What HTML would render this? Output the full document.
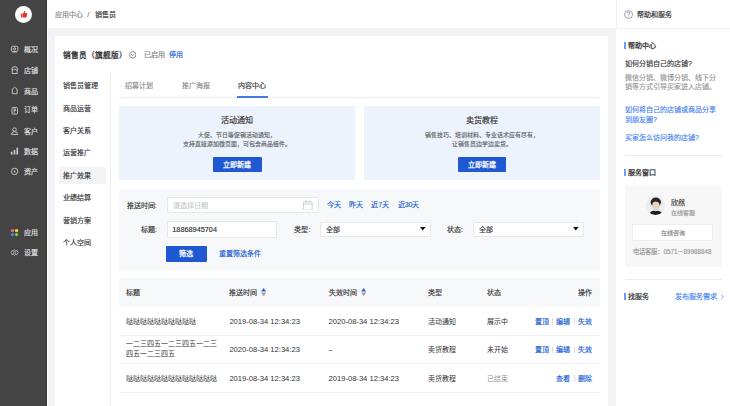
<!DOCTYPE html>
<html lang="zh-CN"><head><meta charset="utf-8">
<style>
html,body{margin:0;padding:0;width:730px;height:406px;overflow:hidden;background:#f2f3f5;font-family:"Liberation Sans",sans-serif;color:#323233}
.a{position:absolute}
.t{position:absolute;white-space:nowrap;line-height:10px;font-size:7px;-webkit-text-stroke:0.15px currentColor}
.d{font-size:7.6px}
.g{color:#969799}
.g2{color:#646566}
.b{color:#155bd4}
.lb{color:#3f7ff0}
.bold{font-weight:bold}
.side .t{color:#e0e0e0}
.c{text-align:center}
.rowb{left:118.6px;width:481.6px;height:1px;background:#eef0f2}
.ops{position:absolute;right:138px;line-height:10px;font-size:7px;white-space:nowrap;-webkit-text-stroke:0.15px #155bd4}
.ops i{display:inline-block;width:0.6px;height:6px;background:#dcdee0;margin:0 3.5px;vertical-align:-0.5px;-webkit-text-stroke:0}
.sort{position:absolute;width:5px;height:8px}
.ns{-webkit-text-stroke:0}
.sort .up{position:absolute;left:0;top:0;width:0;height:0;border-left:2.5px solid transparent;border-right:2.5px solid transparent;border-bottom:3.4px solid #155bd4}
.sort .dn{position:absolute;left:0;top:4.3px;width:0;height:0;border-left:2.5px solid transparent;border-right:2.5px solid transparent;border-top:3.4px solid #a8aaae}
.bar{left:624.1px;width:1.7px;height:7.2px;background:#6b9cf6}
.btn{position:absolute;background:#1f58d2;color:#fff;font-size:7px;line-height:16px;text-align:center;border-radius:1px;box-sizing:border-box;-webkit-text-stroke:0.25px #fff}
.inp{position:absolute;background:#fff;border:1px solid #e5e7ea;border-radius:1px;box-sizing:border-box}
.arr{position:absolute;width:0;height:0;border-left:2.7px solid transparent;border-right:2.7px solid transparent;border-top:3.4px solid #111}
</style></head><body>
<!-- sidebar -->
<div class="a" style="left:0;top:0;width:46px;height:406px;background:#444"></div><div class="a" style="left:46px;top:0;width:0.8px;height:406px;background:#363636"></div><div class="a" style="left:46.8px;top:28px;width:1px;height:378px;background:#fff"></div>
<div class="a" style="left:14.8px;top:5.7px;width:17px;height:17px;border-radius:50%;background:#fff"></div>
<svg class="a" style="left:19.5px;top:10.2px" width="8" height="8" viewBox="0 0 9 9"><path d="M1 4.2h1.6v4.2H1z M3 4.2 L4.6 2.2 L5 0.8 Q5.8 0.6 5.9 1.6 L5.6 3.4 H7.6 Q8.3 3.6 8.1 4.3 L7.4 7.8 Q7.2 8.4 6.6 8.4 H3z" fill="#e5332a"/></svg>
<div class="side">
<svg class="a" style="left:0;top:0" width="46" height="406" viewBox="0 0 46 406" fill="none" stroke="#cfcfcf" stroke-width="0.9">
<rect x="11.4" y="46.3" width="6.4" height="5.2" rx="1.3"/><path d="M13 52.3v0.8 M14.6 52.3v0.8 M16.2 52.3v0.8" /><circle cx="14.6" cy="48.9" r="1.1"/>
<path d="M11.8 69.4 Q11.6 66.6 14.7 66.6 Q17.8 66.6 17.6 69.4 Q16.2 70.4 14.7 69.2 Q13.2 70.4 11.8 69.4z M12.2 70v3.5h5v-3.5"/>
<path d="M12.3 93.7v-4.6l2.4-1.8l2.4 1.8v4.6z"/>
<rect x="12" y="107.5" width="5.5" height="6.6" rx="1"/><path d="M14.2 109v3.8 M14.2 109h1.2v2"/>
<circle cx="14.5" cy="129.6" r="1.8"/><path d="M11.4 134.4 Q11.6 131.6 14.5 131.6 Q17.4 131.6 17.6 134.4z"/>
<path d="M11.6 154v-1.8 M14.5 154v-3.4 M17.3 154v-5.8" stroke-width="1.6" stroke-linecap="round"/>
<circle cx="14.6" cy="171.4" r="3.2"/><ellipse cx="14.6" cy="171.4" rx="0.7" ry="1.2" fill="#cfcfcf" stroke="none"/>
<g transform="translate(14.6 252.6) scale(0.82) translate(-14.5 -252.4)"><circle cx="14.5" cy="252.4" r="1.4"/><path d="M14.5 248.8 l1.3 1.2 l1.9 0 l0.5 1.6 l0.9 0.8 l-0.9 0.8 l-0.5 1.6 l-1.9 0 l-1.3 1.2 l-1.3 -1.2 l-1.9 0 l-0.5 -1.6 l-0.9 -0.8 l0.9 -0.8 l0.5 -1.6 l1.9 0z"/></g>
<circle cx="12.5" cy="230.6" r="1.7" fill="#f06b6b" stroke="none"/><circle cx="16.6" cy="230.6" r="1.7" fill="#fbd03f" stroke="none"/>
<circle cx="12.5" cy="234.6" r="1.7" fill="#3c86f2" stroke="none"/><circle cx="16.6" cy="234.6" r="1.7" fill="#76cf3c" stroke="none"/>
</svg>
<div class="t" style="left:24px;top:45.3px">概况</div>
<div class="t" style="left:24px;top:65.5px">店铺</div>
<div class="t" style="left:24px;top:86.5px">商品</div>
<div class="t" style="left:24px;top:105px">订单</div>
<div class="t" style="left:24px;top:126.5px">客户</div>
<div class="t" style="left:24px;top:147.1px">数据</div>
<div class="t" style="left:24px;top:166.5px">资产</div>
<div class="t" style="left:24px;top:227.9px">应用</div>
<div class="t" style="left:24px;top:247.9px">设置</div>
</div>
<!-- header -->
<div class="a" style="left:46.8px;top:0;width:683.2px;height:28px;background:#fff"></div>
<div class="t" style="left:54.8px;top:9.9px;color:#838486">应用中心</div>
<div class="t" style="left:87.3px;top:9.6px;color:#838486;font-size:7.6px">/</div>
<div class="t" style="left:95px;top:9.9px;-webkit-text-stroke:0.18px #323233">销售员</div>

<!-- main card -->
<div class="a" style="left:54.6px;top:36px;width:553.7px;height:370px;background:#fff"></div>
<div class="t" style="left:63px;top:51.2px;font-size:7.7px;-webkit-text-stroke:0.28px #323233">销售员（旗舰版）</div>
<svg class="a" style="left:128.8px;top:51px" width="7.6" height="7.6" viewBox="0 0 7.6 7.6" fill="none" stroke="#646566" stroke-width="0.75"><circle cx="3.8" cy="3.8" r="3.2"/><path d="M2.2 3.2 L3.6 4.6 L5.4 2.8"/></svg>
<div class="t" style="left:143.6px;top:50.2px;color:#7d7e80">已启用</div>
<div class="t b" style="left:169px;top:50.2px">停用</div>

<!-- second nav -->
<div class="a" style="left:58.9px;top:167.4px;width:47.3px;height:16.2px;background:#f2f3f5"></div>
<div class="t" style="left:63px;top:81.1px">销售员管理</div>
<div class="t" style="left:63px;top:103.9px">商品运营</div>
<div class="t" style="left:63px;top:125.7px">客户关系</div>
<div class="t" style="left:63px;top:147.7px">运营推广</div>
<div class="t" style="left:63px;top:171.1px">推广效果</div>
<div class="t" style="left:63px;top:193.3px">业绩结算</div>
<div class="t" style="left:63px;top:215.9px">营销方案</div>
<div class="t" style="left:63px;top:238.3px">个人空间</div>
<div class="a" style="left:110px;top:72.5px;width:1px;height:334px;background:#ebedf0"></div>

<!-- tabs -->
<div class="a" style="left:118.6px;top:97px;width:481.4px;height:1px;background:#ebedf0"></div>
<div class="t" style="left:124.8px;top:81.3px;color:#8a8b8d">招募计划</div>
<div class="t" style="left:181.7px;top:81.3px;color:#8a8b8d">推广海报</div>
<div class="t" style="left:238.4px;top:81.3px">内容中心</div>
<div class="a" style="left:237.1px;top:96.1px;width:30.6px;height:1.5px;background:#4a78e2"></div>

<!-- cards -->
<div class="a" style="left:118.6px;top:105.5px;width:236.7px;height:74.7px;background:#ecf3fd"></div>
<div class="a" style="left:363.8px;top:105.5px;width:236.2px;height:74.7px;background:#ecf3fd"></div>
<div class="t c" style="left:118.6px;width:236.7px;top:116px;font-size:8px;-webkit-text-stroke:0.18px #323233">活动通知</div>
<div class="t c g2" style="left:118.6px;width:236.7px;top:129.6px;font-size:5.9px">大促、节日等促销活动通知，</div>
<div class="t c g2" style="left:118.6px;width:236.7px;top:139px;font-size:5.9px">支持直接添加微页面，可包含商品组件。</div>
<div class="btn" style="left:213.1px;top:156.5px;width:48.7px;height:15.8px;line-height:16.2px">立即新建</div>
<div class="t c" style="left:363.3px;width:236.7px;top:116px;font-size:8px;-webkit-text-stroke:0.18px #323233">卖货教程</div>
<div class="t c g2" style="left:363.3px;width:236.7px;top:129.6px;font-size:5.9px">销售技巧、培训材料、专业话术应有尽有，</div>
<div class="t c g2" style="left:363.3px;width:236.7px;top:139px;font-size:5.9px">让销售员边学边卖货。</div>
<div class="btn" style="left:457.8px;top:156.5px;width:48.7px;height:15.8px;line-height:16.2px">立即新建</div>

<!-- filter -->
<div class="a" style="left:118.6px;top:188.8px;width:481.6px;height:81px;background:#f7f8fa"></div>
<div class="t" style="left:126.8px;top:200.9px">推送时间:</div>
<div class="inp" style="left:166.5px;top:197px;width:152px;height:16px"></div>
<div class="t" style="left:172.6px;top:200.5px;color:#c8c9cc">请选择日期</div>
<svg class="a" style="left:303.4px;top:199.8px" width="9.6" height="10.6" viewBox="0 0 9.6 10.6"><path d="M0.5 1.8h8.6v8.3H0.5z M0.5 4h8.6 M2.7 0.2v2.6 M6.9 0.2v2.6" fill="none" stroke="#c8c9cc" stroke-width="0.8"/></svg>
<div class="t b" style="left:326.8px;top:200.2px">今天</div>
<div class="t b" style="left:349.2px;top:200.2px">昨天</div>
<div class="t b" style="left:371.2px;top:200.2px">近7天</div>
<div class="t b" style="left:397.7px;top:200.2px">近30天</div>

<div class="t" style="left:140.8px;top:225px">标题:</div>
<div class="inp" style="left:166.5px;top:221px;width:110.7px;height:16.5px"></div>
<div class="t" style="left:172.3px;top:225.3px;font-size:7.3px">18868945704</div>
<div class="t" style="left:294.4px;top:225px">类型:</div>
<div class="inp" style="left:319.5px;top:222px;width:111px;height:15px"></div>
<div class="t" style="left:325.5px;top:225px">全部</div>
<svg class="a" style="left:420px;top:227.3px" width="5.6" height="3.8" viewBox="0 0 5.6 3.8"><path d="M0 0H5.6L2.8 3.6z" fill="#111"/></svg>
<div class="t" style="left:447px;top:225px">状态:</div>
<div class="inp" style="left:472.6px;top:222px;width:111px;height:15px"></div>
<div class="t" style="left:478.8px;top:225px">全部</div>
<svg class="a" style="left:573px;top:227.3px" width="5.6" height="3.8" viewBox="0 0 5.6 3.8"><path d="M0 0H5.6L2.8 3.6z" fill="#111"/></svg>

<div class="btn" style="left:166px;top:245.7px;width:40.8px;height:16px;line-height:16px">筛选</div>
<div class="t b" style="left:219px;top:249.2px">重置筛选条件</div>

<!-- table -->
<div class="a" style="left:118.6px;top:278px;width:481.6px;height:29px;background:#f7f8fa"></div>
<div class="t" style="left:126.4px;top:288px">标题</div>
<div class="t" style="left:229.4px;top:288px">推送时间</div>
<svg class="a" style="left:261.1px;top:288.2px" width="5.4" height="8.4" viewBox="0 0 5.4 8.4"><path d="M2.7 0L5.3 3.6H0.1z" fill="#2a62d8"/><path d="M0.1 4.6H5.3L2.7 8.2z" fill="#a0a2a6"/></svg>
<div class="t" style="left:328.5px;top:288px">失效时间</div>
<svg class="a" style="left:360.7px;top:288.2px" width="5.4" height="8.4" viewBox="0 0 5.4 8.4"><path d="M2.7 0L5.3 3.6H0.1z" fill="#2a62d8"/><path d="M0.1 4.6H5.3L2.7 8.2z" fill="#a0a2a6"/></svg>
<div class="t" style="left:428.2px;top:288px">类型</div>
<div class="t" style="left:486.7px;top:288px">状态</div>
<div class="t" style="left:578px;top:288px">操作</div>

<div class="t ns" style="left:126.4px;top:316.8px">哒哒哒哒哒哒哒哒哒哒</div>
<div class="t d ns" style="left:229.4px;top:316.8px">2019-08-34 12:34:23</div>
<div class="t d ns" style="left:328.5px;top:316.8px">2020-08-34 12:34:23</div>
<div class="t ns" style="left:428.2px;top:316.8px">活动通知</div>
<div class="t ns" style="left:486.7px;top:316.8px">展示中</div>
<div class="ops" style="top:316.8px"><span class="b">置顶</span><i></i><span class="b">编辑</span><i></i><span class="b">失效</span></div>
<div class="a rowb" style="top:334.5px"></div>

<div class="t ns" style="left:126.4px;top:338.6px;line-height:10.2px;white-space:normal;width:93px">一二三四五一二三四五一二三四五一二三四五</div>
<div class="t d ns" style="left:229.4px;top:345.3px">2020-08-34 12:34:23</div>
<div class="t" style="left:328.5px;top:345.3px">–</div>
<div class="t ns" style="left:428.2px;top:345.3px">卖货教程</div>
<div class="t ns" style="left:486.7px;top:345.3px">未开始</div>
<div class="ops" style="top:345.3px"><span class="b">置顶</span><i></i><span class="b">编辑</span><i></i><span class="b">失效</span></div>
<div class="a rowb" style="top:363px"></div>

<div class="t ns" style="left:126.4px;top:373.8px">哒哒哒哒哒哒哒哒哒哒哒哒哒</div>
<div class="t d ns" style="left:229.4px;top:373.8px">2019-08-34 12:34:23</div>
<div class="t d ns" style="left:328.5px;top:373.8px">2019-08-34 12:34:23</div>
<div class="t ns" style="left:428.2px;top:373.8px">卖货教程</div>
<div class="t g ns" style="left:486.7px;top:373.8px">已结束</div>
<div class="ops" style="top:373.8px"><span class="b">查看</span><i></i><span class="b">删除</span></div>
<div class="a rowb" style="top:391.5px"></div>

<!-- right panel -->
<div class="a" style="left:616.3px;top:0;width:113.7px;height:406px;background:#fff"></div><div class="a" style="left:616px;top:0;width:1px;height:28px;background:#eef0f2"></div>
<div class="a" style="left:616px;top:28px;width:114px;height:1px;background:#f0f1f3"></div>
<div class="a" style="left:624px;top:9.6px;width:9px;height:9px;border:0.6px solid #a0a2a6;border-radius:50%;box-sizing:border-box"></div>
<svg class="a" style="left:624px;top:9.6px" width="9" height="9" viewBox="0 0 9 9" fill="none" stroke="#646566" stroke-width="0.6"><path d="M3.2 3.4 Q3.2 2 4.5 2 Q5.8 2 5.8 3.2 Q5.8 4 4.9 4.5 Q4.5 4.8 4.5 5.6"/><circle cx="4.5" cy="6.9" r="0.35" fill="#646566" stroke="none"/></svg>
<div class="t" style="left:637px;top:10.1px;-webkit-text-stroke:0.2px #323233">帮助和服务</div>

<div class="a bar" style="top:41.9px"></div>
<div class="t" style="left:628.1px;top:40.9px;-webkit-text-stroke:0.25px #323233">帮助中心</div>
<div class="t" style="left:625px;top:59.1px;-webkit-text-stroke:0.15px #323233">如何分销自己的店铺?</div>
<div class="t g" style="left:625px;top:73px;white-space:normal;width:94px;line-height:9.3px">微信分销、微博分销、线下分销等方式引导买家进入店铺。</div>
<div class="t lb" style="left:625px;top:105.1px;white-space:normal;width:94px;line-height:10px">如何将自己的店铺或商品分享到朋友圈?</div>
<div class="t lb" style="left:625px;top:133.3px">买家怎么访问我的店铺?</div>
<div class="a" style="left:625px;top:154.5px;width:97px;height:1px;background:#ebedf0"></div>

<div class="a bar" style="top:169px"></div>
<div class="t" style="left:628.1px;top:167.6px;-webkit-text-stroke:0.25px #323233">服务窗口</div>
<div class="a" style="left:624.5px;top:185.5px;width:97.5px;height:81px;background:#f7f7f7"></div>
<div class="a" style="left:645.5px;top:196px;width:19.4px;height:19.4px;border-radius:50%;overflow:hidden;background:#ededed"><svg width="19.5" height="19.5" viewBox="0 0 19.5 19.5"><ellipse cx="9.8" cy="6.2" rx="5.2" ry="4.6" fill="#2b2624"/><ellipse cx="9.9" cy="9.6" rx="3.7" ry="4.6" fill="#e9d3c5"/><path d="M5.8 7.4 Q6.5 3.6 10 3.8 Q13.6 3.8 14 7.2 Q12 5.6 9.6 5.4 Q7.2 5.6 5.8 7.4z" fill="#2b2624"/><path d="M2.5 19.5 Q3.5 14.6 9.8 14.4 Q16 14.6 17.2 19.5z" fill="#1b1b1b"/><path d="M7.6 14.5 Q9.8 16 12 14.5 L11.5 13.4 L8.1 13.4z" fill="#e9d3c5"/></svg></div>
<div class="t" style="left:671px;top:197.9px;-webkit-text-stroke:0.15px #323233">欣然</div>
<div class="t g" style="left:671px;top:207.9px;font-size:6.05px">在线客服</div>
<div class="a" style="left:632.4px;top:224px;width:81px;height:16.5px;background:#fff;border:1px solid #ebedf0;box-sizing:border-box"></div>
<div class="t c" style="left:632.4px;width:81px;top:228px;font-size:6px;color:#858688">在线咨询</div>
<div class="t g" style="left:633.4px;top:247.1px;font-size:6.3px">电话客服：0571－89988848</div>
<div class="a" style="left:625px;top:279px;width:97px;height:1px;background:#ebedf0"></div>

<div class="a bar" style="top:292.8px"></div>
<div class="t" style="left:627.6px;top:291.5px;-webkit-text-stroke:0.2px #323233">找服务</div>
<div class="t lb" style="left:674.9px;top:291.5px">发布服务需求</div>
<svg class="a" style="left:719.5px;top:293.5px" width="4.5" height="6" viewBox="0 0 4.5 6" fill="none" stroke="#3f7ff0" stroke-width="0.7"><path d="M1.2 0.8 L3.4 3 L1.2 5.2"/></svg>
</body></html>
